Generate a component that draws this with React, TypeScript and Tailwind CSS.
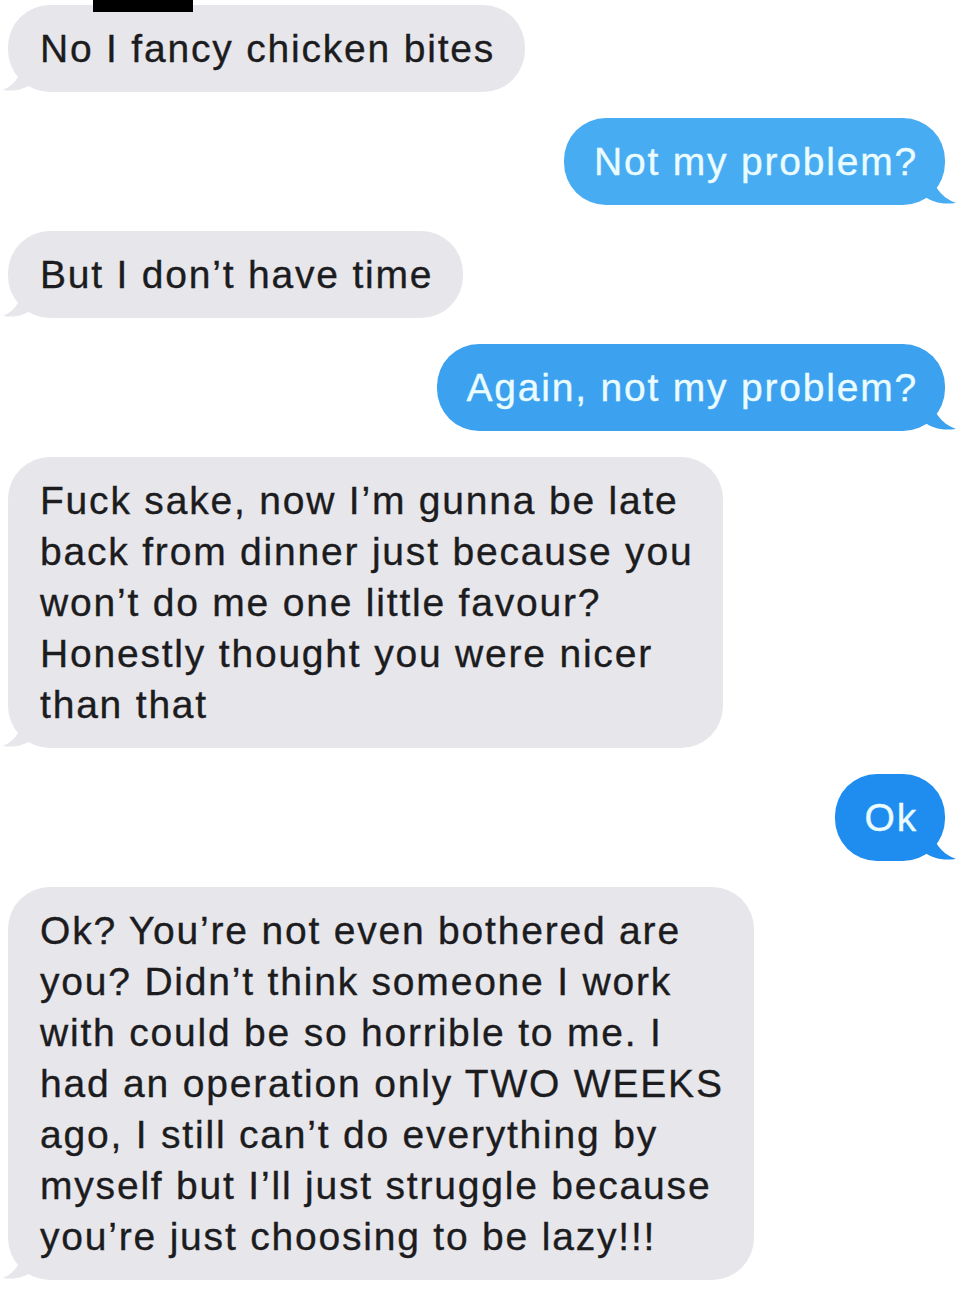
import React from "react";

type Msg = { from: "them" | "me"; lines: string[]; color?: string };

const messages: Msg[] = [
  { from: "them", lines: ["No I fancy chicken bites"] },
  { from: "me", lines: ["Not my problem?"], color: "#48acf2" },
  { from: "them", lines: ["But I don’t have time"] },
  { from: "me", lines: ["Again, not my problem?"], color: "#3ca2ef" },
  {
    from: "them",
    lines: [
      "Fuck sake, now I’m gunna be late",
      "back from dinner just because you",
      "won’t do me one little favour?",
      "Honestly thought you were nicer",
      "than that",
    ],
  },
  { from: "me", lines: ["Ok"], color: "#1f8def" },
  {
    from: "them",
    lines: [
      "Ok? You’re not even bothered are",
      "you? Didn’t think someone I work",
      "with could be so horrible to me. I",
      "had an operation only TWO WEEKS",
      "ago, I still can’t do everything by",
      "myself but I’ll just struggle because",
      "you’re just choosing to be lazy!!!",
    ],
  },
];

function Tail({ side, color }: { side: "left" | "right"; color: string }) {
  if (side === "left") {
    return (
      <svg className="absolute -left-[7px] bottom-0" width="40" height="36" viewBox="0 0 40 36">
        <path d="M22 0 C22 16 16 28 2 34 C14 36 24 33 32 27 L40 20 L40 0 Z" fill={color} />
      </svg>
    );
  }
  return (
    <svg className="absolute -right-[13px] bottom-0" width="40" height="36" viewBox="0 0 40 36">
      <path d="M14 0 C14 16 22 28 38 34 C24 36 14 33 6 27 L0 20 L0 0 Z" fill={color} />
    </svg>
  );
}

function Bubble({ msg }: { msg: Msg }) {
  const me = msg.from === "me";
  const bg = me ? msg.color ?? "#3ca2ef" : "#e6e6eb";
  return (
    <div className={me ? "flex justify-end" : "flex justify-start"}>
      <div
        className={
          "relative w-fit rounded-[42px] py-[18px] text-[39px] leading-[51px] tracking-[1.8px] [-webkit-text-stroke:0.35px] " +
          (me ? "pl-[30px] pr-[27px] text-[#eafcff]" : "pl-[32px] pr-[30px] text-[#1c1c1e]")
        }
        style={{ backgroundColor: bg }}
      >
        <Tail side={me ? "right" : "left"} color={bg} />
        <div className="relative whitespace-nowrap">
          {msg.lines.map((l, i) => (
            <div key={i}>{l}</div>
          ))}
        </div>
      </div>
    </div>
  );
}

export default function App() {
  return (
    <div
      className="relative w-[980px] h-[1292px] overflow-hidden bg-white"
      style={{ fontFamily: '"Liberation Sans", Arial, sans-serif' }}
    >
      {/* redaction bar */}
      <div className="absolute left-[93px] top-0 w-[100px] h-[12px] bg-black z-10" />

      <div className="flex flex-col gap-[26px] pt-[5px] pl-[8px] pr-[35px]">
        {messages.map((m, i) => (
          <Bubble key={i} msg={m} />
        ))}
      </div>
    </div>
  );
}
